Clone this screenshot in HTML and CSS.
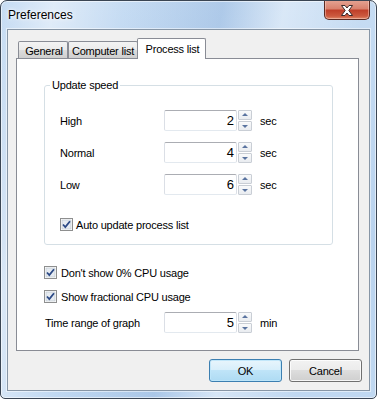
FILE: index.html
```html
<!DOCTYPE html>
<html>
<head>
<meta charset="utf-8">
<title>Preferences</title>
<link rel="stylesheet" href="styles.css">
</head>
<body>
<div class="window">
  <div class="titlebar">
    <span class="title">Preferences</span>
    <div class="close">
      <svg width="14" height="11" viewBox="0 0 14 11">
        <path d="M1.5 0.5 H5 L7 3 L9 0.5 H12.5 L8.8 5.5 L12.5 10.5 H9 L7 8 L5 10.5 H1.5 L5.2 5.5 Z" fill="#fff" stroke="#3b2a2a" stroke-width="1" stroke-linejoin="round"/>
      </svg>
    </div>
  </div>
  <div class="client">
    <div class="tabs">
      <div class="tab tab-general">General</div>
      <div class="tab tab-computer">Computer list</div>
      <div class="tab tab-active">Process list</div>
    </div>
    <div class="panel">
      <fieldset class="group">
        <legend>Update speed</legend>
        <div class="row row-first">
          <span class="label">High</span>
          <div class="edit">2</div>
          <div class="spinbtns"><div class="sb sb-up"></div><div class="sb sb-down"></div></div>
          <span class="unit">sec</span>
        </div>
        <div class="row">
          <span class="label">Normal</span>
          <div class="edit">4</div>
          <div class="spinbtns"><div class="sb sb-up"></div><div class="sb sb-down"></div></div>
          <span class="unit">sec</span>
        </div>
        <div class="row">
          <span class="label">Low</span>
          <div class="edit">6</div>
          <div class="spinbtns"><div class="sb sb-up"></div><div class="sb sb-down"></div></div>
          <span class="unit">sec</span>
        </div>
        <div class="check check-auto">
          <span class="box"><svg width="13" height="13" viewBox="0 0 13 13"><rect x="0.5" y="0.5" width="12" height="12" fill="#fff" stroke="#8e8f8f"/><rect x="2" y="2" width="9" height="9" fill="#e6ebf1" stroke="#b9c1ca" stroke-width="0.6"/><path d="M3 6.5 L5.3 9 L10 3.2" fill="none" stroke="#2c4a86" stroke-width="1.8"/></svg></span>
          <span>Auto update process list</span>
        </div>
      </fieldset>
      <div class="check check-cpu0">
        <span class="box"><svg width="13" height="13" viewBox="0 0 13 13"><rect x="0.5" y="0.5" width="12" height="12" fill="#fff" stroke="#8e8f8f"/><rect x="2" y="2" width="9" height="9" fill="#e6ebf1" stroke="#b9c1ca" stroke-width="0.6"/><path d="M3 6.5 L5.3 9 L10 3.2" fill="none" stroke="#2c4a86" stroke-width="1.8"/></svg></span>
        <span>Don't show 0% CPU usage</span>
      </div>
      <div class="check check-frac">
        <span class="box"><svg width="13" height="13" viewBox="0 0 13 13"><rect x="0.5" y="0.5" width="12" height="12" fill="#fff" stroke="#8e8f8f"/><rect x="2" y="2" width="9" height="9" fill="#e6ebf1" stroke="#b9c1ca" stroke-width="0.6"/><path d="M3 6.5 L5.3 9 L10 3.2" fill="none" stroke="#2c4a86" stroke-width="1.8"/></svg></span>
        <span>Show fractional CPU usage</span>
      </div>
      <div class="row row-time">
        <span class="label label-time">Time range of graph</span>
        <div class="edit">5</div>
        <div class="spinbtns"><div class="sb sb-up"></div><div class="sb sb-down"></div></div>
        <span class="unit">min</span>
      </div>
    </div>
    <div class="buttons">
      <div class="btn btn-default">OK</div>
      <div class="btn">Cancel</div>
    </div>
  </div>
</div>
</body>
</html>
```

FILE: styles.css
```css
html, body {
  margin: 0;
  padding: 0;
  background: #ffffff;
}
body {
  font-family: "Liberation Sans", Arial, sans-serif;
  font-size: 11px;
  letter-spacing: -0.2px;
  color: #000;
}
.window {
  width: 377px;
  height: 399px;
  box-sizing: border-box;
  border: 1px solid #3a4553;
  border-radius: 7px 7px 5px 5px;
  padding: 0 6px 7px 6px;
  display: flex;
  flex-direction: column;
  background:
    linear-gradient(100deg, rgba(255,255,255,0) 0%, rgba(255,255,255,0.45) 12%, rgba(255,255,255,0) 28%, rgba(120,160,210,0.3) 50%, rgba(255,255,255,0.35) 64%, rgba(255,255,255,0) 82%),
    linear-gradient(#c6dcf3, #bad3ee 60%, #c0d8f1);
  box-shadow: inset 0 0 0 1px rgba(255,255,255,0.55);
  overflow: hidden;
}
.titlebar {
  height: 28px;
  flex: none;
  display: flex;
  align-items: flex-start;
}
.title {
  margin-left: 1px;
  line-height: 28px;
  font-size: 12px;
  letter-spacing: 0;
  color: #000;
  text-shadow: 0 0 6px #fff, 0 0 3px #fff;
}
.close {
  margin-left: auto;
  margin-top: -1px;
  width: 46px;
  height: 20px;
  box-sizing: border-box;
  border: 1px solid #5a2a22;
  border-top: none;
  border-radius: 0 0 5px 5px;
  background: linear-gradient(#e5a595 0%, #d9826e 45%, #c0402a 55%, #cc5a3f 85%, #e08a6a 100%);
  box-shadow: inset 0 0 0 1px rgba(255,220,210,0.45);
  display: flex;
  align-items: center;
  justify-content: center;
}
.close svg { display: block; margin-top: 1px; }
.client {
  height: 362px;
  flex: none;
  box-sizing: border-box;
  border: 1px solid #8796a6;
  background: #f0f0f0;
  padding: 8px 0 0 8px;
  box-shadow: 0 0 0 1px rgba(255,255,255,0.5);
}
.tabs {
  display: flex;
  align-items: flex-end;
  height: 20px;
  padding-left: 2px;
}
.tab {
  height: 17px;
  box-sizing: border-box;
  border: 1px solid #898c95;
  border-bottom: none;
  border-radius: 2px 2px 0 0;
  background: linear-gradient(#f3f3f3, #ebebeb 50%, #dddddd 50%, #cfcfcf);
  display: flex;
  align-items: center;
  justify-content: center;
  padding-top: 1px;
}
.tab-general { width: 50px; padding-left: 2px; }
.tab-computer { width: 70px; margin-left: 0; }
.tab-active {
  width: 69px;
  height: 21px;
  margin-left: -1px;
  margin-bottom: -1px;
  background: #fff;
  position: relative;
  z-index: 1;
  padding-top: 0;
  padding-bottom: 1px;
  padding-left: 2px;
}
.panel {
  width: 343px;
  height: 293px;
  box-sizing: border-box;
  border: 1px solid #898c95;
  background: #fff;
  padding: 0;
}
.group {
  margin: 20px 0 0 27px;
  width: 289px;
  box-sizing: border-box;
  border: 1px solid #d5dfe5;
  border-radius: 3px;
  padding: 0 0 13px 0;
  min-width: 0;
}
.group legend {
  margin-left: 5px;
  padding: 0 2px;
  line-height: 13px;
  font-size: 11px;
}
.row {
  display: flex;
  align-items: center;
  height: 21px;
  margin-top: 11px;
  padding-left: 15px;
}
.row-first { margin-top: 18px; }
.label { width: 104px; flex: none; }
.edit {
  width: 73px;
  height: 21px;
  flex: none;
  box-sizing: border-box;
  border: 1px solid #dbdfe6;
  border-top-color: #abadb3;
  border-bottom-color: #e3e9ef;
  border-radius: 2px;
  background: #fff;
  text-align: right;
  padding-right: 2px;
  line-height: 19px;
  font-size: 13px;
  letter-spacing: 0;
}
.spinbtns {
  margin-left: 1px;
  width: 14px;
  height: 21px;
  display: flex;
  flex-direction: column;
  justify-content: space-between;
}
.sb {
  height: 10px;
  box-sizing: border-box;
  border: 1px solid #c9ced5;
  border-radius: 1px;
  background: linear-gradient(#f9fafb, #e9ecf0);
  position: relative;
}
.sb::after {
  content: "";
  position: absolute;
  left: 3px;
  width: 0;
  height: 0;
  border-left: 3px solid transparent;
  border-right: 3px solid transparent;
}
.sb-up::after { top: 2px; border-bottom: 3px solid #5a74a0; }
.sb-down::after { top: 3px; border-top: 3px solid #5a74a0; }
.unit { margin-left: 8px; }
.check {
  display: flex;
  align-items: center;
  height: 13px;
}
.check .box { width: 13px; height: 13px; margin-right: 3px; flex: none; }
.check .box svg { display: block; }
.check-auto { margin: 23px 0 0 15px; }
.check-cpu0 { margin: 21px 0 0 27px; }
.check-cpu0 .box, .check-frac .box { margin-right: 4px; }
.check-frac { margin: 11px 0 0 27px; }
.row-time { margin-top: 9px; padding-left: 28px; }
.label-time { width: 119px; }
.buttons {
  display: flex;
  justify-content: flex-end;
  gap: 7px;
  margin-top: 8px;
  padding-right: 7px;
}
.btn {
  width: 73px;
  height: 23px;
  box-sizing: border-box;
  border: 1px solid #707070;
  border-radius: 3px;
  background: linear-gradient(#f2f2f2 0%, #ebebeb 50%, #dddddd 50%, #cfcfcf 100%);
  box-shadow: inset 0 0 0 1px rgba(255,255,255,0.8);
  display: flex;
  align-items: center;
  justify-content: center;
  font-size: 11px;
}
.btn-default {
  border-color: #3c7fb1;
  background: linear-gradient(#e8f5fc 0%, #d6eefb 50%, #bfe4f8 50%, #aedbf3 100%);
  box-shadow: inset 0 0 0 1px rgba(190,230,250,0.9);
}
```
